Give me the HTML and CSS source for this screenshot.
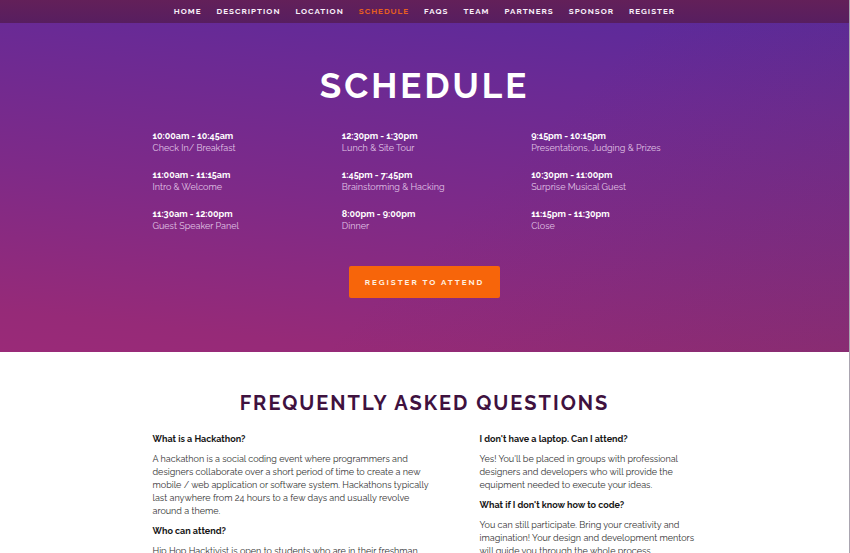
FILE: index.html
```html
<!DOCTYPE html>
<html lang="en">
<head>
<meta charset="utf-8">
<meta name="viewport" content="width=device-width, initial-scale=1">
<title>Hip Hop Hacktivist</title>
<link rel="stylesheet" href="styles.css">
</head>
<body>
<nav class="nav" aria-label="Main">
  <a href="#home">HOME</a>
  <a href="#description">DESCRIPTION</a>
  <a href="#location">LOCATION</a>
  <a class="active" href="#schedule">SCHEDULE</a>
  <a href="#faqs">FAQS</a>
  <a href="#team">TEAM</a>
  <a href="#partners">PARTNERS</a>
  <a href="#sponsor">SPONSOR</a>
  <a href="#register">REGISTER</a>
</nav>
<main>
  <section class="schedule" id="schedule">
    <h1>SCHEDULE</h1>
    <div class="slots">
      <div><h3>10:00am - 10:45am</h3><p>Check In/ Breakfast</p></div>
      <div><h3>11:00am - 11:15am</h3><p>Intro &amp; Welcome</p></div>
      <div><h3>11:30am - 12:00pm</h3><p>Guest Speaker Panel</p></div>
      <div><h3>12:30pm - 1:30pm</h3><p>Lunch &amp; Site Tour</p></div>
      <div><h3>1:45pm - 7:45pm</h3><p>Brainstorming &amp; Hacking</p></div>
      <div><h3>8:00pm - 9:00pm</h3><p>Dinner</p></div>
      <div><h3>9:15pm - 10:15pm</h3><p>Presentations, Judging &amp; Prizes</p></div>
      <div><h3>10:30pm - 11:00pm</h3><p>Surprise Musical Guest</p></div>
      <div><h3>11:15pm - 11:30pm</h3><p>Close</p></div>
    </div>
    <a class="button" href="#register">REGISTER TO ATTEND</a>
  </section>
  <section class="faq" id="faqs">
    <h2>FREQUENTLY ASKED QUESTIONS</h2>
    <div class="columns">
      <div class="column">
        <h3>What is a Hackathon?</h3>
        <p>A hackathon is a social coding event where programmers and designers collaborate over a short period of time to create a new mobile / web application or software system. Hackathons typically last anywhere from 24 hours to a few days and usually revolve around a theme.</p>
        <h3>Who can attend?</h3>
        <p>Hip Hop Hacktivist is open to students who are in their freshman,</p>
      </div>
      <div class="column">
        <h3>I don't have a laptop. Can I attend?</h3>
        <p>Yes! You'll be placed in groups with professional designers and developers who will provide the equipment needed to execute your ideas.</p>
        <h3>What if I don't know how to code?</h3>
        <p>You can still participate. Bring your creativity and imagination! Your design and development mentors will guide you through the whole process.</p>
      </div>
    </div>
  </section>
</main>
</body>
</html>
```
FILE: styles.css
```css
* { box-sizing: border-box; }

body {
  margin: 0;
  height: 100vh;
  overflow: hidden;
  background: #fff;
  border-right: 1px solid #aaa5b0;
  color: #333;
  font: 9px/12px Raleway, Lato, "Open Sans", sans-serif;
}

h1, h2, h3, p { margin: 0; }
h3 { font-size: 9px; font-weight: 700; }
a { text-decoration: none; }

.nav {
  display: flex;
  justify-content: center;
  gap: 15px;
  padding: 5px 0 6px;
  background: linear-gradient(#632059, #571e60);
  font-size: 8px;
}
.nav a { color: #f8eef8; font-weight: 700; letter-spacing: 1px; }
.nav .active { color: #e75f20; }

.schedule {
  display: flex;
  flex-direction: column;
  align-items: center;
  padding: 43px 24px 54px;
  background:
    linear-gradient(135deg, transparent 55%, rgba(120, 50, 80, 0.25)),
    linear-gradient(186deg, #5a2a9c, #6a2a95 22%, #7e2a88 55%, #962a78 90%, #9a2a78);
  color: #fff;
}
.schedule h1 {
  font-size: 35px;
  line-height: 40px;
  letter-spacing: 3px;
}
.slots {
  display: grid;
  grid-template-rows: repeat(3, auto);
  grid-auto-flow: column;
  grid-auto-columns: 1fr;
  gap: 15px 24px;
  width: 100%;
  max-width: 544px;
  margin: 24px 0 34px;
}
.slots p { color: #e0c4e6; }
.button {
  padding: 10px 16px;
  border-radius: 2px;
  background: #f7650a;
  color: #fff0e0;
  font-size: 8px;
  font-weight: 700;
  letter-spacing: 2px;
}

.faq { padding: 37px 24px; }
.faq h2 {
  color: #3f123f;
  font-size: 20px;
  line-height: 28px;
  letter-spacing: 2px;
  text-align: center;
}
.columns {
  display: grid;
  grid-template-columns: 9fr 7fr;
  gap: 48px;
  max-width: 544px;
  margin: 16px auto 0;
  line-height: 13px;
}
.column { display: flex; flex-direction: column; gap: 7px; }
.column h3 { color: #161616; }
```
